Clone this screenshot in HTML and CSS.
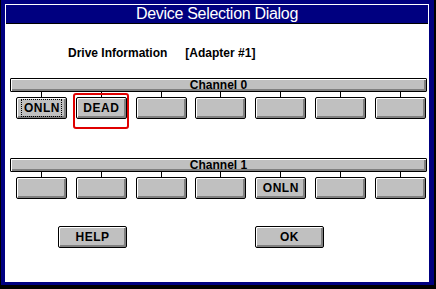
FILE: index.html
```html
<!DOCTYPE html>
<html lang="en">
<head>
    <meta charset="UTF-8">
    <title>Device Selection Dialog</title>
    <link rel="stylesheet" href="styles.css">
</head>
<body>
    <div class="window">
        <div class="client">
            <div class="titlebar">Device Selection Dialog</div>

            <div class="drive-info">
                <span>Drive Information</span>
                <span>[Adapter #1]</span>
            </div>

            <!-- Channel 0 -->
            <div class="channel">
                <div class="channel-bar">Channel 0</div>
                <div class="device-row">
                    <div class="slot"><div class="stem"></div><div class="dev-btn"><span class="focus">ONLN</span></div></div>
                    <div class="slot marked"><div class="stem"></div><div class="dev-btn">DEAD</div><div class="mark"></div></div>
                    <div class="slot"><div class="stem"></div><div class="dev-btn"></div></div>
                    <div class="slot"><div class="stem"></div><div class="dev-btn"></div></div>
                    <div class="slot"><div class="stem"></div><div class="dev-btn"></div></div>
                    <div class="slot"><div class="stem"></div><div class="dev-btn"></div></div>
                    <div class="slot"><div class="stem"></div><div class="dev-btn"></div></div>
                </div>
            </div>

            <!-- Channel 1 -->
            <div class="channel second">
                <div class="channel-bar">Channel 1</div>
                <div class="device-row">
                    <div class="slot"><div class="stem"></div><div class="dev-btn"></div></div>
                    <div class="slot"><div class="stem"></div><div class="dev-btn"></div></div>
                    <div class="slot"><div class="stem"></div><div class="dev-btn"></div></div>
                    <div class="slot"><div class="stem"></div><div class="dev-btn"></div></div>
                    <div class="slot"><div class="stem"></div><div class="dev-btn">ONLN</div></div>
                    <div class="slot"><div class="stem"></div><div class="dev-btn"></div></div>
                    <div class="slot"><div class="stem"></div><div class="dev-btn"></div></div>
                </div>
            </div>

            <div class="actions">
                <div class="cmd-btn">HELP</div>
                <div class="cmd-btn">OK</div>
            </div>
        </div>
    </div>
</body>
</html>
```

FILE: styles.css
```css
body {
    margin: 0;
    background-color: #000;
    font-family: "Liberation Sans", Arial, sans-serif;
    color: #000;
}
.window {
    box-sizing: border-box;
    width: 433px;
    height: 285px;
    margin-left: 1px;
    padding: 4px 5px 3px 4px;
    background-color: #000080; /* navy frame */
}
.client {
    height: 100%;
    background-color: #fff;
    overflow: hidden;
}
.titlebar {
    height: 18px;
    margin: 1px 1px 0 1px;
    border-bottom: 1px solid #000;
    background-color: #000080;
    color: #fff;
    font-size: 16px;
    line-height: 18px;
    letter-spacing: -0.3px;
    text-align: center;
}
.drive-info {
    display: flex;
    gap: 18px;
    margin: 22px 0 0 63px;
    font-size: 12px;
    font-weight: bold;
    line-height: 14px;
}

/* channel groups */
.channel {
    margin: 18px 2px 0 5px;
}
.channel.second {
    margin-top: 39px;
}
.channel-bar {
    box-sizing: border-box;
    height: 14px;
    border: 1px solid #000;
    border-radius: 1px;
    background-color: #c0c0c0;
    box-shadow: inset 1px 1px #fff, inset -2px -2px #808080;
    font-size: 12px;
    font-weight: bold;
    line-height: 12px;
    text-align: center;
}
.device-row {
    display: flex;
    justify-content: space-between;
    margin: 0 1px 0 6px;
}
.slot {
    position: relative;
    width: 51px;
}
.stem {
    width: 1px;
    height: 5px;
    margin: 0 auto;
    background-color: #000;
}
.dev-btn, .cmd-btn {
    box-sizing: border-box;
    height: 22px;
    border: 1px solid #000;
    border-radius: 2px;
    background-color: #c0c0c0;
    box-shadow: inset 1px 1px #fff, inset -2px -2px #808080;
    font-size: 12px;
    font-weight: bold;
    line-height: 20px;
    letter-spacing: 0.5px;
    text-align: center;
}
.focus {
    padding: 1px 1px 1px 2px;
    outline: 1px dotted #000;
    outline-offset: 0;
}
/* red marker around the dead drive */
.mark {
    position: absolute;
    top: 1px;
    left: -3px;
    width: 56px;
    height: 36px;
    box-sizing: border-box;
    border: 2px solid #e00000;
    border-radius: 3px;
}

.actions {
    display: flex;
    gap: 128px;
    margin: 27px 0 0 53px;
}
.cmd-btn {
    width: 69px;
}
```
